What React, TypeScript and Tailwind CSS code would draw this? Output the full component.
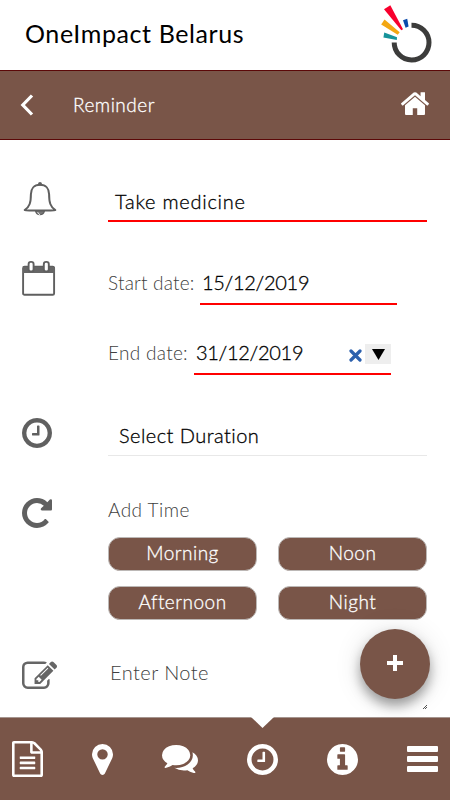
import React from "react";

const glyphs = {
  home: "M1472 992v480q0 26-19 45t-45 19h-384v-384h-256v384h-384q-26 0-45-19t-19-45v-480q0-1 .5-3t.5-3l575-474 575 474q1 2 1 6zm223-69l-62 74q-8 9-21 11h-3q-13 0-21-7l-692-577-692 577q-12 8-24 7-13-2-21-11l-62-74q-8-10-7-23.5t11-21.5l719-599q32-26 76-26t76 26l244 204v-195q0-14 9-23t23-9h192q14 0 23 9t9 23v408l219 182q10 8 11 21.5t-7 23.5z",
  clock: "M1024 544v448q0 14-9 23t-23 9h-320q-14 0-23-9t-9-23v-64q0-14 9-23t23-9h224v-352q0-14 9-23t23-9h64q14 0 23 9t9 23zm416 352q0-148-73-273t-198-198-273-73-273 73-198 198-73 273 73 273 198 198 273 73 273-73 198-198 73-273zm224 0q0 209-103 385.5t-279.5 279.5-385.5 103-385.5-103-279.5-279.5-103-385.5 103-385.5 279.5-279.5 385.5-103 385.5 103 279.5 279.5 103 385.5z",
  repeat: "M1664 256v448q0 26-19 45t-45 19h-448q-42 0-59-40-17-39 14-69l138-138q-148-137-349-137-104 0-198.5 40.5t-163.5 109.5-109.5 163.5-40.5 198.5 40.5 198.5 109.5 163.5 163.5 109.5 198.5 40.5q119 0 225-52t179-147q7-10 23-12 15 0 25 9l137 138q9 8 9.5 20.5t-7.5 22.5q-109 132-264 204.5t-327 72.5q-156 0-298-61t-245-164-164-245-61-298 61-298 164-245 245-164 298-61q147 0 284.5 55.5t244.5 156.5l130-129q29-31 70-14 39 17 39 59z",
  edit: "M888 1184l116-116-152-152-116 116v56h96v96h56zm440-720q-16-16-33 1l-350 350q-17 17-1 33t33-1l350-350q17-17 1-33zm80 594v190q0 119-84.5 203.5t-203.5 84.5h-832q-119 0-203.5-84.5t-84.5-203.5v-832q0-119 84.5-203.5t203.5-84.5h832q63 0 117 25 15 7 18 23 3 17-9 29l-49 49q-14 14-32 8-23-6-45-6h-832q-66 0-113 47t-47 113v832q0 66 47 113t113 47h832q66 0 113-47t47-113v-126q0-13 9-22l64-64q15-15 35-7t20 29zm-96-738l288 288-672 672h-288v-288zm444 132l-92 92-288-288 92-92q28-28 68-28t68 28l152 152q28 28 28 68t-28 68z",
  marker: "M1152 640q0-106-75-181t-181-75-181 75-75 181 75 181 181 75 181-75 75-181zm256 0q0 109-33 179l-364 774q-16 33-47.5 52t-67.5 19-67.5-19-46.5-52l-365-774q-33-70-33-179 0-212 150-362t362-150 362 150 150 362z",
  comments: "M1408 768q0 139-94 257t-256.5 186.5-353.5 68.5q-86 0-176-16-124 88-278 128-36 9-86 16h-3q-11 0-20.5-8t-11.5-21q-1-3-1-6.5t.5-6.5 2-6l2.5-5 3.5-5.5 4-5 4.5-5 4-4.5q5-6 23-25t26-29.5 22.5-29 25-38.5 20.5-44q-124-72-195-177t-71-224q0-139 94-257t256.5-186.5 353.5-68.5 353.5 68.5 256.5 186.5 94 257zm384 256q0 120-71 224.5t-195 176.5q10 24 20.5 44t25 38.5 22.5 29 26 29.5 23 25q1 1 4 4.5t4.5 5 4 5 3.5 5.5l2.5 5 2 6 .5 6.5-1 6.5q-3 14-13 22t-22 7q-50-7-86-16-154-40-278-128-90 16-176 16-271 0-472-132 58 4 88 4 161 0 309-45t264-129q125-92 192-212t67-254q0-77-23-152 129 71 204 178t75 230z",
  info: "M1152 1376v-160q0-14-9-23t-23-9h-96v-512q0-14-9-23t-23-9h-320q-14 0-23 9t-9 23v160q0 14 9 23t23 9h96v320h-96q-14 0-23 9t-9 23v160q0 14 9 23t23 9h448q14 0 23-9t9-23zm-128-896v-160q0-14-9-23t-23-9h-192q-14 0-23 9t-9 23v160q0 14 9 23t23 9h192q14 0 23-9t9-23zm640 416q0 209-103 385.5t-279.5 279.5-385.5 103-385.5-103-279.5-279.5-103-385.5 103-385.5 279.5-279.5 385.5-103 385.5 103 279.5 279.5 103 385.5z",
  file: "M1596 380q28 28 48 76t20 88v1152q0 40-28 68t-68 28h-1344q-40 0-68-28t-28-68v-1600q0-40 28-68t68-28h896q40 0 88 20t76 48zm-444-244v376h376q-10-29-22-41l-313-313q-12-12-41-22zm384 1528v-1024h-416q-40 0-68-28t-28-68v-416h-768v1536h1280zm-1024-864q0-14 9-23t23-9h704q14 0 23 9t9 23v64q0 14-9 23t-23 9h-704q-14 0-23-9t-9-23v-64zm736 224q14 0 23 9t9 23v64q0 14-9 23t-23 9h-704q-14 0-23-9t-9-23v-64q0-14 9-23t23-9h704zm0 256q14 0 23 9t9 23v64q0 14-9 23t-23 9h-704q-14 0-23-9t-9-23v-64q0-14 9-23t23-9h704z",
};

function Glyph({ name, box, className }: { name: keyof typeof glyphs; box: string; className: string }) {
  return (
    <svg viewBox={box} preserveAspectRatio="none" fill="currentColor" className={`block shrink-0 ${className}`}>
      <path d={glyphs[name]} />
    </svg>
  );
}

function Logo() {
  return (
    <svg viewBox="0 0 60 64" className="h-16 w-[60px] shrink-0 overflow-visible">
      <path d="M23.2 42.5A17.4 17.4 0 1 0 40.5 25.2" fill="none" stroke="#3c3c3b" strokeWidth="5" />
      <path d="M13 9.3L19.3 5.2 32 29.2 30.3 30.3Z" fill="#f8002d" />
      <path d="M13.5 19.6L10.2 24.4 26.7 34.8 28.7 32.2Z" fill="#f3a712" />
      <path d="M13.3 32.5L12.4 37.5 25.8 40 26 37.3Z" fill="#16939a" />
      <path d="M32 20.2L36.2 18.7 37.6 26.6 34.6 27.8Z" fill="#0b4bab" />
    </svg>
  );
}

function Bell() {
  return (
    <svg viewBox="0 0 34 36" className="h-9 w-[34px]" fill="none" stroke="#5f5f5f" strokeWidth="2">
      <circle cx="17" cy="2.8" r="1.9" fill="#5f5f5f" stroke="none" />
      <path d="M17 3.8C10.8 3.8 7.9 8 7.9 13.2C7.9 21.5 6.7 25.7 1.7 29C4 29.8 30 29.8 32.3 29C27.3 25.7 26.1 21.5 26.1 13.2C26.1 8 23.2 3.8 17 3.8Z" strokeLinejoin="round" />
      <path d="M12.6 30.2A4.5 4.5 0 0 0 21.4 30.2Z" fill="#777" strokeWidth="1.2" />
      <path d="M14.7 31.2Q15.3 33.2 17 33.7" stroke="#fff" strokeWidth=".9" />
    </svg>
  );
}

function Calendar() {
  return (
    <svg viewBox="0 0 34 36" className="h-9 w-[34px]">
      <rect x="1.1" y="6.8" width="31" height="28" rx="1.4" fill="#fff" stroke="#5f5f5f" strokeWidth="1.9" />
      <path d="M1 7h32v6H1z" fill="#666" />
      <rect x="6.6" y="1.9" width="5" height="9.6" rx="2.3" fill="#fff" stroke="#5f5f5f" strokeWidth="1.9" />
      <rect x="21.8" y="1.9" width="5" height="9.6" rx="2.3" fill="#fff" stroke="#5f5f5f" strokeWidth="1.9" />
    </svg>
  );
}

function TimeButton({ label }: { label: string }) {
  return (
    <button className="flex h-[34px] items-center justify-center rounded-[12px] border border-[#bcb8b6] bg-[#795548] pb-[2px] text-[19px] font-light tracking-[0.5px] text-white [-webkit-text-stroke:0.3px]">
      {label}
    </button>
  );
}

export default function App() {
  return (
    <div className="flex h-[800px] w-[450px] flex-col overflow-hidden bg-white font-['Lato','Open_Sans',sans-serif] font-normal whitespace-nowrap text-black">
      <header className="flex h-[70px] shrink-0 items-start justify-between pl-[25px] pr-[19px]">
        <h1 className="pt-[16px] text-[25px] leading-[34px] tracking-[0.6px]">OneImpact Belarus</h1>
        <Logo />
      </header>

      <div className="flex h-[70px] shrink-0 items-center border-y border-[#5b0808] bg-[#795548] pl-5 pr-[21px] text-white">
        <svg viewBox="0 0 14 22" className="h-[22px] w-[14px]" fill="none" stroke="currentColor" strokeWidth="3.2">
          <path d="M12 1.5L2.8 11L12 20.5" />
        </svg>
        <span className="ml-[39px] grow text-[19px] font-light tracking-[0.5px] [-webkit-text-stroke:0.3px]">Reminder</span>
        <Glyph name="home" box="89 245 1614 1291" className="mb-[3px] h-[23px] w-[28px]" />
      </div>

      <main className="relative flex h-[577px] shrink-0 flex-col pl-[22px] pr-[23px] text-[20px]">
        <section className="flex h-[100px] shrink-0 pt-[40px]">
          <div className="w-[86px] pt-px pl-px"><Bell /></div>
          <div className="h-[42px] grow border-b-2 border-[#ff0000] pt-[6px] pl-[7px] font-light leading-[30px] tracking-[0.75px] [-webkit-text-stroke:0.3px]">Take medicine</div>
        </section>

        <section className="flex h-[145px] shrink-0 pt-[20px]">
          <div className="w-[86px]"><Calendar /></div>
          <div className="flex flex-col">
            <div className="flex h-[70px] items-start">
              <span className="w-[92px] pt-[8px] text-[19px] font-light leading-[30px] tracking-[0.2px] text-[#404040]">Start date:</span>
              <span className="h-[45px] w-[197px] border-b-2 border-[#ff0000] pt-[7px] pl-[2px] font-light leading-[30px] tracking-[-0.3px] [-webkit-text-stroke:0.3px]">15/12/2019</span>
            </div>
            <div className="flex items-start">
              <span className="w-[86px] pt-[8px] text-[19px] font-light leading-[30px] tracking-[0.3px] text-[#404040]">End date:</span>
              <div className="flex h-[45px] w-[197px] items-start border-b-2 border-[#ff0000] pl-[2px]">
                <span className="grow pt-[7px] font-light leading-[30px] tracking-[-0.3px] [-webkit-text-stroke:0.3px]">31/12/2019</span>
                <svg viewBox="0 0 13 13" className="mt-[19px] mr-[3px] size-[13px]" stroke="#2c60ad" strokeWidth="3.2" strokeLinecap="round">
                  <path d="M2 2L11 11M11 2L2 11" />
                </svg>
                <span className="mt-[14px] flex h-5 w-[26px] items-center justify-center bg-[#eee]">
                  <svg viewBox="0 0 13 11" className="h-[11px] w-[13px]"><path d="M0 0H13L6.5 11Z" /></svg>
                </span>
              </div>
            </div>
          </div>
        </section>

        <section className="flex h-[100px] shrink-0 pt-[33px] text-[#606060]">
          <div className="w-[86px]"><Glyph name="clock" box="128 128 1536 1536" className="size-[30px]" /></div>
          <div className="h-[38px] grow border-b border-[#e8e8e8] pl-[11px] font-light leading-[34px] tracking-[0.45px] text-black [-webkit-text-stroke:0.3px]">Select Duration</div>
        </section>

        <section className="flex h-[155px] shrink-0 text-[#606060]">
          <div className="w-[86px] pt-[13px]"><Glyph name="repeat" box="128 128 1536 1536" className="size-[30px]" /></div>
          <div className="grow pt-[10px]">
            <p className="text-[19px] font-light leading-[30px] tracking-[0.45px] text-[#404040]">Add Time</p>
            <div className="mt-[12px] grid grid-cols-[149px_149px] gap-x-[21px] gap-y-[15px]">
              <TimeButton label="Morning" />
              <TimeButton label="Noon" />
              <TimeButton label="Afternoon" />
              <TimeButton label="Night" />
            </div>
          </div>
        </section>

        <section className="flex shrink-0 pt-[21px] text-[#666]">
          <Glyph name="edit" box="0 108 1784 1428" className="h-[28px] w-[35px]" />
          <span className="-mt-[2px] ml-[31px] pl-[22px] font-light leading-[26px] tracking-[0.45px] text-[#404040]">Enter Note</span>
        </section>
        <svg viewBox="0 0 4 4" className="absolute right-[23px] bottom-[8px] size-1" stroke="#555"><path d="M0 4L4 0M2 4L4 2" /></svg>
        <button className="absolute top-[489px] right-[20px] flex size-[70px] items-center justify-center rounded-full bg-[#795548] shadow-[0_7px_12px_rgba(0,0,0,0.35),0_2px_28px_rgba(0,0,0,0.12)]">
          <svg viewBox="0 0 16 16" className="mb-[2px] size-4" stroke="#fff" strokeWidth="4"><path d="M0 8H16M8 0V16" /></svg>
        </button>
      </main>

      <nav className="relative flex h-[83px] shrink-0 items-center border-t border-[#a5958f] bg-[#795548] pl-3 pr-3 text-white">
        <svg viewBox="0 0 23 11" className="absolute -top-px left-[251px] h-[11px] w-[23px]"><path d="M0 0H23L11.5 11Z" fill="#fff" /></svg>
        <Glyph name="file" box="128 0 1536 1792" className="h-[36px] w-[31px]" />
        <Glyph name="marker" box="384 128 1024 1536" className="ml-[49px] h-[31px] w-[21px]" />
        <Glyph name="comments" box="0 256 1792 1408" className="ml-[49px] h-[28px] w-[36px]" />
        <Glyph name="clock" box="128 128 1536 1536" className="ml-[49px] size-[31px]" />
        <Glyph name="info" box="128 128 1536 1536" className="ml-[49px] size-[31px]" />
        <div className="ml-[49px] flex w-[31px] flex-col gap-[4px]">
          <span className="h-[6px] rounded-[1px] bg-white" />
          <span className="h-[6px] rounded-[1px] bg-white" />
          <span className="h-[6px] rounded-[1px] bg-white" />
        </div>
      </nav>
    </div>
  );
}
